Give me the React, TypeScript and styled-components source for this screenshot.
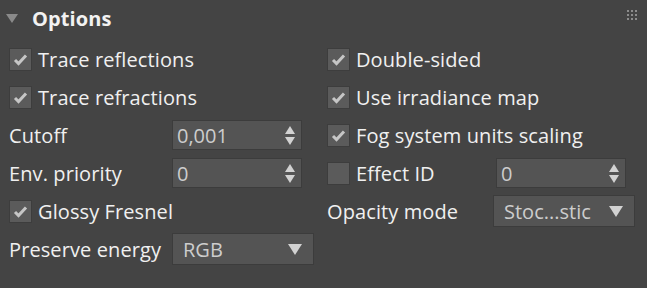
import React from 'react';
import styled, { createGlobalStyle } from 'styled-components';

const GlobalStyle = createGlobalStyle`
  html, body {
    margin: 0;
    padding: 0;
    background: #444444;
  }
  body {
    font-family: 'Open Sans', 'Noto Sans', sans-serif;
  }
`;

const Panel = styled.div`
  width: 647px;
  height: 288px;
  background: #444444;
  color: #ececec;
  box-sizing: border-box;
  overflow: hidden;
`;

const Header = styled.div`
  height: 36px;
  display: flex;
  align-items: center;
  padding: 0 10px 0 6px;
  gap: 14px;
`;

const Caret = styled.span`
  width: 0;
  height: 0;
  border-left: 6px solid transparent;
  border-right: 6px solid transparent;
  border-top: 9px solid #8a8a8a;
  margin-top: 1px;
`;

const Title = styled.h3`
  margin: 0;
  font-size: 20px;
  font-weight: 700;
  color: #f2f2f2;
  flex: 1;
  letter-spacing: 0.1px;
`;

const Grip = styled.div`
  display: grid;
  grid-template-columns: repeat(3, 2px);
  grid-auto-rows: 2px;
  gap: 2px;
  margin-top: -6px;

  span {
    background: #8c8c8c;
  }
`;

const Columns = styled.div`
  display: grid;
  grid-template-columns: 318px 1fr;
  padding: 4px 0 0 9px;
`;

const Column = styled.div`
  display: flex;
  flex-direction: column;
`;

const Row = styled.div<{ $labelWidth?: number }>`
  height: 38px;
  display: flex;
  align-items: center;

  & > .label {
    width: ${(p) => (p.$labelWidth ? `${p.$labelWidth}px` : 'auto')};
    flex-shrink: 0;
  }
`;

const Label = styled.span`
  font-size: 20px;
  color: #f0f0f0;
  white-space: nowrap;
  letter-spacing: 0.1px;
`;

const CheckLabel = styled.label`
  display: flex;
  align-items: center;
  gap: 6px;
`;

const Box = styled.span`
  width: 21px;
  height: 21px;
  background: #5b5b5b;
  border: 1px solid #3d3d3d;
  display: flex;
  align-items: center;
  justify-content: center;
`;

const Spinner = styled.div`
  box-sizing: border-box;
  width: 130px;
  height: 30px;
  background: #545454;
  border: 1px solid #3c3c3c;
  display: flex;
  align-items: center;
  justify-content: space-between;
  padding: 0 6px 0 4px;
`;

const Value = styled.span`
  font-size: 20px;
  color: #cdcdcd;
  letter-spacing: 0;
`;

const Arrows = styled.span`
  display: flex;
  flex-direction: column;
  gap: 3px;
`;

const Tri = styled.span<{ $dir: 'up' | 'down'; $w?: number; $h?: number }>`
  width: 0;
  height: 0;
  border-left: ${(p) => (p.$w ?? 10) / 2}px solid transparent;
  border-right: ${(p) => (p.$w ?? 10) / 2}px solid transparent;
  ${(p) =>
    p.$dir === 'up'
      ? `border-bottom: ${p.$h ?? 8}px solid #d2d2d2;`
      : `border-top: ${p.$h ?? 8}px solid #d2d2d2;`}
`;

const Select = styled.div`
  width: 142px;
  height: 32px;
  box-sizing: border-box;
  background: #545454;
  border: 1px solid #3c3c3c;
  display: flex;
  align-items: center;
  justify-content: space-between;
  padding: 0 11px 0 10px;
`;

const Check = ({ checked = true }: { checked?: boolean }) => (
  <Box>
    {checked && (
      <svg width='15' height='13' viewBox='0 0 15 13'>
        <path
          d='M2 7 L5.5 10.5 L13 2.5'
          fill='none'
          stroke='#c6c6c6'
          strokeWidth='3'
          strokeLinecap='butt'
        />
      </svg>
    )}
  </Box>
);

const CheckRow = ({ text, checked }: { text: string; checked?: boolean }) => (
  <Row>
    <CheckLabel>
      <Check checked={checked} />
      <Label>{text}</Label>
    </CheckLabel>
  </Row>
);

const SpinBox = ({ value }: { value: string }) => (
  <Spinner>
    <Value>{value}</Value>
    <Arrows>
      <Tri $dir='up' />
      <Tri $dir='down' />
    </Arrows>
  </Spinner>
);

const Dropdown = ({ value }: { value: string }) => (
  <Select>
    <Value>{value}</Value>
    <Tri $dir='down' $w={14} $h={11} />
  </Select>
);

const App = () => {
  return (
    <Panel>
      <GlobalStyle />
      <Header>
        <Caret />
        <Title>Options</Title>
        <Grip>
          {Array.from({ length: 9 }).map((_, i) => (
            <span key={i} />
          ))}
        </Grip>
      </Header>
      <Columns>
        <Column>
          <CheckRow text='Trace reflections' />
          <CheckRow text='Trace refractions' />
          <Row $labelWidth={163}>
            <Label className='label'>Cutoff</Label>
            <SpinBox value='0,001' />
          </Row>
          <Row $labelWidth={163}>
            <Label className='label'>Env. priority</Label>
            <SpinBox value='0' />
          </Row>
          <CheckRow text='Glossy Fresnel' />
          <Row $labelWidth={163}>
            <Label className='label'>Preserve energy</Label>
            <Dropdown value='RGB' />
          </Row>
        </Column>
        <Column>
          <CheckRow text='Double-sided' />
          <CheckRow text='Use irradiance map' />
          <CheckRow text='Fog system units scaling' />
          <Row $labelWidth={169}>
            <CheckLabel className='label'>
              <Check checked={false} />
              <Label>Effect ID</Label>
            </CheckLabel>
            <SpinBox value='0' />
          </Row>
          <Row $labelWidth={166}>
            <Label className='label'>Opacity mode</Label>
            <Dropdown value='Stoc...stic' />
          </Row>
        </Column>
      </Columns>
    </Panel>
  );
};

export default App;
